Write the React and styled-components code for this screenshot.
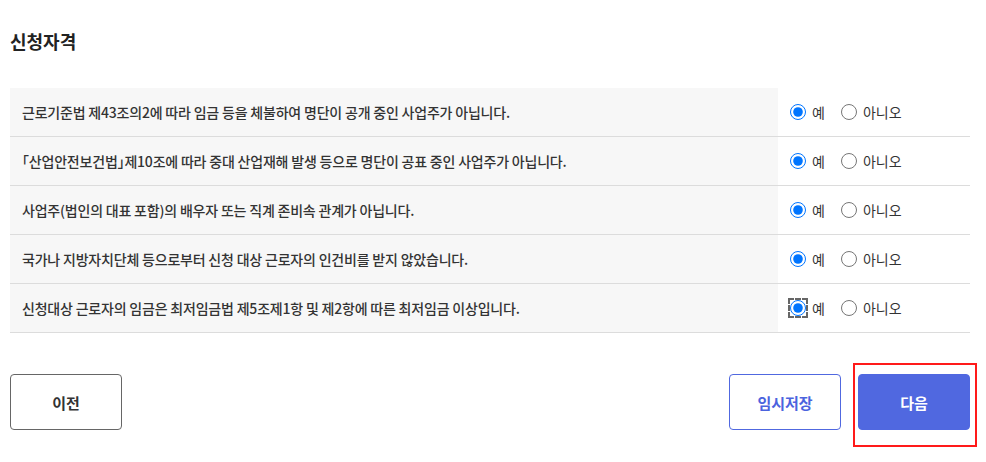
import React from "react";
import styled, { createGlobalStyle } from "styled-components";

const Global = createGlobalStyle`
  html, body { margin: 0; padding: 0; background: #fff; }
  body { font-family: "Noto Sans CJK KR", "Noto Sans", sans-serif; color: #222; }
  * { box-sizing: border-box; }
`;

const Page = styled.div`
  width: 960px;
  min-height: 462px;
  margin-left: 10px;
  padding-top: 28px;
  padding-bottom: 30px;
`;

const Title = styled.h2`
  margin: 0 0 34px 0;
  font-size: 18px;
  font-weight: 700;
  line-height: 26px;
  color: #222;
`;

const Table = styled.div`
  display: flex;
  flex-direction: column;
`;

const Row = styled.div`
  display: grid;
  grid-template-columns: 768px 1fr;
  height: 49px;
  border-bottom: 1px solid #dcdcdc;
`;

const Question = styled.div`
  background: #f7f7f7;
  display: flex;
  align-items: center;
  padding-left: 12px;
  font-size: 14px;
  font-weight: 500;
  color: #333;
  letter-spacing: -0.2px;
  white-space: pre;
`;

const Bracket = styled.span`
  font-feature-settings: "halt" 1;
`;

const Answer = styled.div`
  display: flex;
  align-items: center;
  padding-left: 12px;
  gap: 16px;
`;

const Option = styled.label`
  display: flex;
  align-items: center;
  gap: 6px;
  font-size: 14px;
  color: #333;
  cursor: pointer;
`;

const Radio = styled.input.attrs({ type: "radio" })`
  width: 16px;
  height: 16px;
  margin: 0;
  accent-color: #0075ff;
  outline: ${(p) => (p.$focused ? "2px dashed #666" : "none")};
  outline-offset: 0px;
`;

const Footer = styled.div`
  display: flex;
  align-items: center;
  margin-top: 41px;
`;

const Spacer = styled.div`
  flex: 1;
`;

const Button = styled.button`
  display: block;
  width: 112px;
  height: 56px;
  border-radius: 4px;
  font-family: inherit;
  font-size: 15px;
  font-weight: 700;
  cursor: pointer;
  border: 1px solid ${(p) => (p.$variant ? "#5068e0" : "#666")};
  background: ${(p) => (p.$variant === "primary" ? "#5068e0" : "#fff")};
  color: ${(p) => (p.$variant === "primary" ? "#fff" : p.$variant === "outline" ? "#4b63de" : "#333")};
`;

const Highlight = styled.div`
  position: relative;
  margin-left: 17px;
  &::after {
    content: "";
    position: absolute;
    top: -11px;
    left: -5px;
    right: -7px;
    bottom: -17px;
    border: 2px solid #ff1a1a;
    pointer-events: none;
  }
`;

const items = [
  "근로기준법 제43조의2에 따라 임금 등을 체불하여 명단이 공개 중인 사업주가 아닙니다.",
  <>
    <Bracket>「</Bracket>산업안전보건법<Bracket>」</Bracket>제10조에 따라 중대 산업재해 발생 등으로 명단이 공표 중인 사업주가 아닙니다.
  </>,
  "사업주(법인의 대표 포함)의 배우자 또는 직계 존비속 관계가 아닙니다.",
  "국가나 지방자치단체 등으로부터 신청 대상 근로자의 인건비를 받지 않았습니다.",
  "신청대상 근로자의 임금은 최저임금법 제5조제1항 및 제2항에 따른 최저임금 이상입니다.",
];

export default function App() {
  return (
    <>
      <Global />
      <Page>
        <Title>신청자격</Title>
        <Table>
          {items.map((q, i) => (
            <Row key={i}>
              <Question>{q}</Question>
              <Answer>
                <Option>
                  <Radio name={`q${i}`} defaultChecked $focused={i === 4} />
                  예
                </Option>
                <Option>
                  <Radio name={`q${i}`} />
                  아니오
                </Option>
              </Answer>
            </Row>
          ))}
        </Table>
        <Footer>
          <Button>이전</Button>
          <Spacer />
          <Button $variant="outline">임시저장</Button>
          <Highlight>
            <Button $variant="primary">다음</Button>
          </Highlight>
        </Footer>
      </Page>
    </>
  );
}
